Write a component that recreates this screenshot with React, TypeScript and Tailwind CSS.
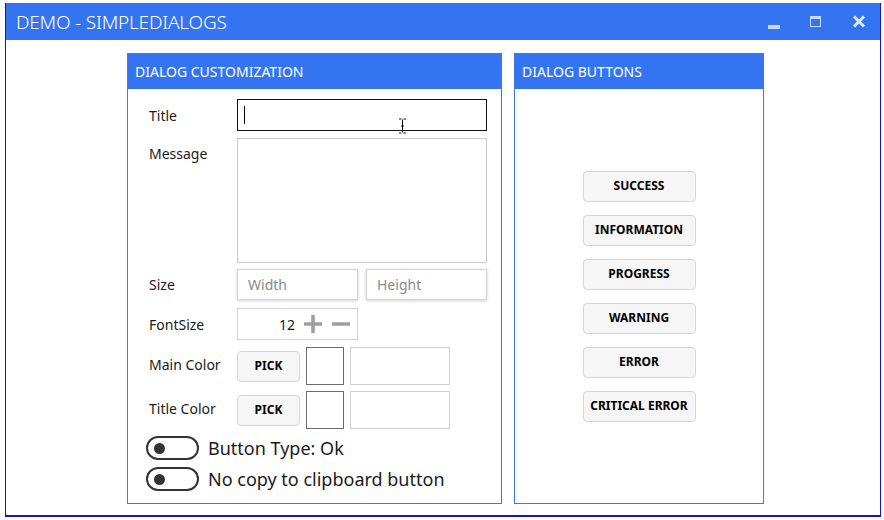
import React from "react";

const font = { fontFamily: '"Noto Sans", "Open Sans", sans-serif' };

function Label({ children, top = false }: { children: React.ReactNode; top?: boolean }) {
  return (
    <div className={`w-[88px] shrink-0 text-[14px] text-[#1a1a1a] ${top ? "self-start pt-[5px]" : ""}`}>
      {children}
    </div>
  );
}

function PickRow({ label }: { label: string }) {
  return (
    <div className="flex items-center">
      <div className="w-[88px] shrink-0 text-[14px] text-[#1a1a1a] -mt-[4px]">{label}</div>
      <button className="w-[63px] h-[31px] rounded-[4px] border border-[#d6d6d6] bg-[#f6f6f6] text-[12px] font-bold text-black">
        PICK
      </button>
      <div className="ml-[6px] w-[38px] h-[38px] border-[1.5px] border-[#6b6b6b] bg-white" />
      <div className="ml-[6px] w-[100px] h-[38px] border border-[#cfcfcf] bg-white" />
    </div>
  );
}

function Toggle({ text }: { text: string }) {
  return (
    <div className="flex items-center h-[24px]">
      <div className="w-[53px] h-[24px] rounded-full border-[2.5px] border-[#333] flex items-center pl-[6px]">
        <div className="w-[11px] h-[11px] rounded-full bg-[#333]" />
      </div>
      <span className="ml-[9px] text-[18px] leading-none text-[#1a1a1a]">{text}</span>
    </div>
  );
}

function DialogButton({ children }: { children: React.ReactNode }) {
  return (
    <button className="w-[113px] h-[31px] rounded-[4px] border border-[#d6d6d6] bg-[#f6f6f6] text-[12px] font-bold text-black">
      {children}
    </button>
  );
}

export default function App() {
  return (
    <div className="w-[884px] h-[520px] bg-white pl-[5px] pt-[3px]" style={font}>
      <div className="w-[876px] h-[514px] flex flex-col border-x border-b-[2px] border-[#1414d2] bg-white">
        <div className="h-[37px] shrink-0 bg-[#3574f0] flex items-center pl-[10px] pr-[14px]">
          <span className="text-[19px] font-light text-white tracking-[-0.2px] mt-[2px]">DEMO - SIMPLEDIALOGS</span>
          <div className="ml-auto flex items-center text-[#d4e1fb]">
            <div className="w-[12px] h-[4px] bg-[#c7d8fa] mt-[10px]" />
            <div className="ml-[30px] w-[11px] h-[11px] border-[1.5px] border-t-[3px] border-[#c7d8fa]" />
            <svg className="ml-[31px]" width="14" height="13" viewBox="0 0 14 13">
              <path d="M2 1.5 L12 11.5 M12 1.5 L2 11.5" stroke="#dde7fc" strokeWidth="3" />
            </svg>
          </div>
        </div>
        <div className="flex-1 flex justify-center gap-[12px] pt-[13px] pb-[11px] pl-[5px]">
          <div className="w-[375px] border border-[#3d78e8] flex flex-col">
            <div className="h-[35px] bg-[#3574f0] flex items-center pl-[7px] text-[14px] text-white">
              DIALOG CUSTOMIZATION
            </div>
            <div className="relative flex flex-col pl-[21px] pt-[10px]">
              <div className="flex items-center">
                <Label>Title</Label>
                <div className="w-[250px] h-[32px] border-[1.5px] border-[#111] flex items-center pl-[6px]">
                  <div className="w-px h-[18px] bg-black" />
                </div>
              </div>
              <div className="flex items-center mt-[7px]">
                <Label top>Message</Label>
                <div className="w-[250px] h-[125px] border border-[#cccccc]" />
              </div>
              <div className="flex items-center mt-[6px]">
                <Label>Size</Label>
                <div className="w-[121px] h-[31px] border border-[#d4d4d4] shadow-[0_1px_3px_rgba(0,0,0,0.18)] flex items-center pl-[10px] text-[14px] text-[#8a8a8a]">
                  Width
                </div>
                <div className="ml-[8px] w-[121px] h-[31px] border border-[#d4d4d4] shadow-[0_1px_3px_rgba(0,0,0,0.18)] flex items-center pl-[10px] text-[14px] text-[#8a8a8a]">
                  Height
                </div>
              </div>
              <div className="flex items-center mt-[8px]">
                <Label>FontSize</Label>
                <div className="w-[121px] h-[32px] border border-[#d4d4d4] flex items-center justify-end pr-[7px]">
                  <span className="text-[14px] text-[#1a1a1a] mr-[9px]">12</span>
                  <svg width="18" height="18" viewBox="0 0 18 18">
                    <path d="M9 0 V18 M0 9 H18" stroke="#9e9e9e" strokeWidth="3.5" />
                  </svg>
                  <svg className="ml-[10px]" width="18" height="18" viewBox="0 0 18 18">
                    <path d="M0 9 H18" stroke="#9e9e9e" strokeWidth="3.5" />
                  </svg>
                </div>
              </div>
              <div className="mt-[7px]">
                <PickRow label="Main Color" />
              </div>
              <div className="mt-[6px]">
                <PickRow label="Title Color" />
              </div>
              <div className="-ml-[3px] mt-[7px] flex flex-col gap-[7px]">
                <Toggle text="Button Type: Ok" />
                <Toggle text="No copy to clipboard button" />
              </div>
              <svg className="absolute left-[270px] top-[29px]" width="9" height="16" viewBox="0 0 9 16">
                <path d="M1 1 H3.5 M5.5 1 H8 M4.5 1.5 V14.5 M1 15 H3.5 M5.5 15 H8 M3 8 H6" stroke="#111" strokeWidth="1" />
              </svg>
            </div>
          </div>
          <div className="w-[250px] border border-[#3d78e8] flex flex-col">
            <div className="h-[35px] bg-[#3574f0] flex items-center pl-[7px] text-[14px] text-white">
              DIALOG BUTTONS
            </div>
            <div className="flex-1 flex flex-col items-center justify-center gap-[13px]">
              <DialogButton>SUCCESS</DialogButton>
              <DialogButton>INFORMATION</DialogButton>
              <DialogButton>PROGRESS</DialogButton>
              <DialogButton>WARNING</DialogButton>
              <DialogButton>ERROR</DialogButton>
              <DialogButton>CRITICAL ERROR</DialogButton>
            </div>
          </div>
        </div>
      </div>
    </div>
  );
}
